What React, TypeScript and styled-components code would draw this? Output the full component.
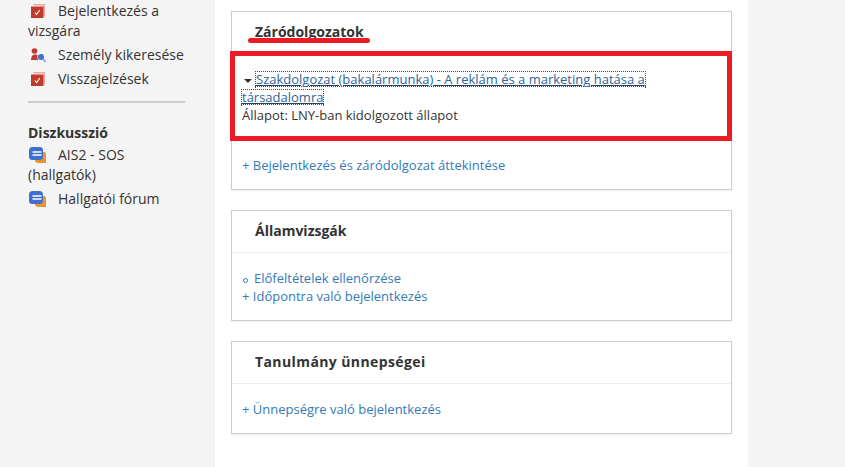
import React from "react";
import styled, { createGlobalStyle } from "styled-components";

const Global = createGlobalStyle`
  html, body { margin: 0; padding: 0; height: 467px; overflow: hidden; background: #f4f4f4; }
  body { font-family: "Open Sans", "Liberation Sans", sans-serif; font-size: 14px; color: #333; }
`;

const Page = styled.div`
  display: grid;
  grid-template-columns: 215px 533px 97px;
  height: 467px;
  overflow: hidden;
`;

const Sidebar = styled.nav`
  padding: 1px 30px 0 28px;
  line-height: 20px;
  color: #333;
`;

const Item = styled.div`
  margin-bottom: 4px;
`;

const IconSlot = styled.span`
  display: inline-block;
  width: 30px;
  height: 16px;
  vertical-align: -3px;
  svg { display: block; overflow: visible; }
`;

const Rule = styled.hr`
  border: 0;
  height: 2px;
  background: #ccc;
  margin: 12px 0 20px;
`;

const SideTitle = styled.div`
  font-weight: 700;
  margin-bottom: 2px;
`;

const Main = styled.main`
  background: #fff;
  padding: 11px 16px 0;
`;

const Card = styled.section`
  position: relative;
  border: 1px solid #ccc;
  background: #fff;
  box-shadow: 0 1px 2px rgba(0, 0, 0, 0.06);
  margin-bottom: 20px;
`;

const CardHead = styled.header<{ $spacing?: number }>`
  height: 41px;
  padding-left: 23px;
  border-bottom: 1px solid #eee;
  font-size: 14px;
  font-weight: 700;
  line-height: 39px;
  letter-spacing: ${(p) => p.$spacing ?? 0}px;
  color: #333;
`;

const CardBody = styled.div<{ $top: number }>`
  padding: ${(p) => p.$top}px 10px 15px;
  font-size: 13px;
  line-height: 18px;
`;

const Thesis = styled.div`
  margin-bottom: 32px;
`;

const Caret = styled.span`
  display: inline-block;
  width: 0;
  height: 0;
  margin: 0 4px 0 2px;
  border-left: 4px solid transparent;
  border-right: 4px solid transparent;
  border-top: 4px solid #333;
  vertical-align: middle;
`;

const dotH = "linear-gradient(90deg, #23527c 50%, transparent 50%)";
const dotV = "linear-gradient(180deg, #23527c 50%, transparent 50%)";

const FocusLink = styled.a`
  color: #2f6496;
  text-decoration: underline;
  text-decoration-color: #1f4468;
  -webkit-box-decoration-break: clone;
  box-decoration-break: clone;
  padding: 0 1px;
  margin: 0 -1px;
  background-image: ${dotH}, ${dotH}, ${dotV}, ${dotV};
  background-repeat: repeat-x, repeat-x, repeat-y, repeat-y;
  background-size: 2px 1px, 2px 1px, 1px 2px, 1px 2px;
  background-position: 0 1px, 0 16px, 0 1px, 100% 1px;
  background-clip: padding-box;
`;

const ActionLink = styled.a`
  display: block;
  color: #337ab7;
`;

const Bullet = styled.span`
  display: inline-block;
  box-sizing: border-box;
  width: 5px;
  height: 5px;
  margin: 0 6px 0 1px;
  border: 1px solid #337ab7;
  border-radius: 50%;
`;

const HeadUnderline = styled.span`
  position: absolute;
  left: 16px;
  top: 26px;
  width: 122px;
  height: 5px;
  border-radius: 2.5px;
  background: #ed1c24;
`;

const Highlight = styled.span`
  position: absolute;
  left: -2px;
  right: -1px;
  top: 39px;
  height: 90px;
  box-sizing: border-box;
  border: 5px solid #ed1c24;
  pointer-events: none;
`;

const CheckIcon = () => (
  <svg width="18" height="16" viewBox="0 0 18 16">
    <path d="M5.500 1H17V13.500H15.500V2.500H5.500Z" fill="#e8a79f" />
    <rect x="3" y="3.500" width="12.500" height="11.500" fill="#c0392b" />
    <path d="M6.800 9.500L8.600 11.500L11.800 7" fill="none" stroke="#fff" strokeWidth="1.100" />
  </svg>
);

const PersonIcon = () => (
  <svg width="18" height="16" viewBox="0 0 18 16">
    <circle cx="6.500" cy="4" r="2.800" fill="#c0392b" />
    <path d="M3 13C3 9.500 4.500 7.500 7 7.500C8.200 7.500 9.300 8 9.800 8.600C9 10 9.300 11.800 10.500 13Z" fill="#c0392b" />
    <circle cx="13" cy="10" r="3" fill="#3f6fd1" />
    <path d="M15 12L17.500 15" stroke="#7f9ad8" strokeWidth="1.500" />
  </svg>
);

const ChatIcon = () => (
  <svg width="18" height="16" viewBox="0 0 18 16">
    <path d="M8 5H16C17.200 5 18 5.800 18 7V16H10C8.500 16 7 15 7 13.500V7Z" fill="#e8952f" />
    <rect x="1" y="0" width="14" height="13" rx="3.500" fill="#3f6fd1" />
    <path d="M4.500 5H13.500M4.500 8H13.500" stroke="#fff" strokeWidth="1.300" />
  </svg>
);

export default function App() {
  return (
    <>
      <Global />
      <Page>
        <Sidebar>
          <Item><IconSlot><CheckIcon /></IconSlot>Bejelentkezés a vizsgára</Item>
          <Item><IconSlot><PersonIcon /></IconSlot>Személy kikeresése</Item>
          <Item><IconSlot><CheckIcon /></IconSlot>Visszajelzések</Item>
          <Rule />
          <SideTitle>Diszkusszió</SideTitle>
          <Item><IconSlot><ChatIcon /></IconSlot>AIS2 - SOS (hallgatók)</Item>
          <Item><IconSlot><ChatIcon /></IconSlot>Hallgatói fórum</Item>
        </Sidebar>
        <Main>
          <Card>
            <CardHead>Záródolgozatok</CardHead>
            <CardBody $top={16}>
              <Thesis>
                <Caret />
                <FocusLink>Szakdolgozat (bakalármunka) - A reklám és a marketing hatása a társadalomra</FocusLink>
                <br />
                Állapot: LNY-ban kidolgozott állapot
              </Thesis>
              <ActionLink>+ Bejelentkezés és záródolgozat áttekintése</ActionLink>
            </CardBody>
            <HeadUnderline />
            <Highlight />
          </Card>
          <Card>
            <CardHead>Államvizsgák</CardHead>
            <CardBody $top={16}>
              <ActionLink><Bullet />Előfeltételek ellenőrzése</ActionLink>
              <ActionLink>+ Időpontra való bejelentkezés</ActionLink>
            </CardBody>
          </Card>
          <Card>
            <CardHead $spacing={0.4}>Tanulmány ünnepségei</CardHead>
            <CardBody $top={16}>
              <ActionLink>+ Ünnepségre való bejelentkezés</ActionLink>
            </CardBody>
          </Card>
        </Main>
        <div />
      </Page>
    </>
  );
}
